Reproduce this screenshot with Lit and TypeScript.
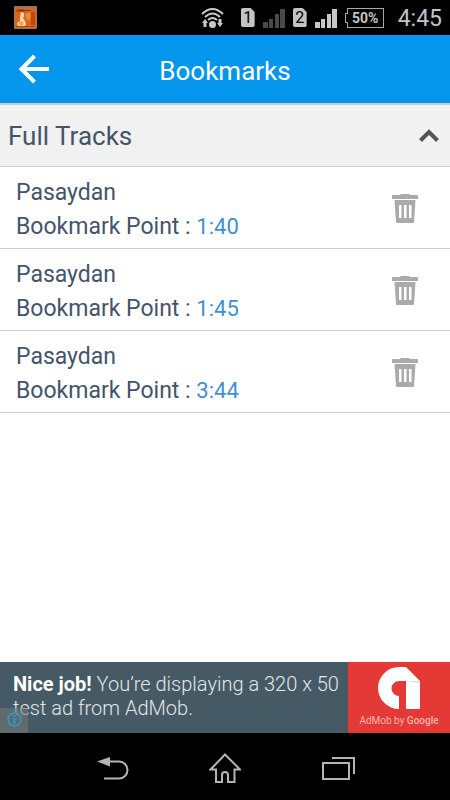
import { LitElement, html, css } from "lit";
import { customElement, property, state } from "lit/decorators.js";

interface Bookmark {
  track: string;
  point: string;
}

@customElement("status-bar")
class StatusBar extends LitElement {
  static styles = css`
    :host {
      display: flex;
      align-items: center;
      box-sizing: border-box;
      height: 35px;
      padding: 0 8px 0 14px;
      background: #000;
      color: #c4c4c4;
    }
    svg {
      display: block;
      flex: none;
    }
    .app {
      margin-right: auto;
    }
    .net {
      display: flex;
      align-items: center;
      gap: 8px;
      margin: 0 14px 0 17px;
    }
    .sim {
      width: 14px;
      height: 19px;
      background: #c4c4c4;
      color: #000;
      border-radius: 2px;
      clip-path: polygon(0 0, 10px 0, 100% 4px, 100% 100%, 0 100%);
      font-size: 16px;
      line-height: 19px;
      text-align: center;
    }
    .battery {
      position: relative;
      box-sizing: border-box;
      width: 37px;
      height: 20px;
      margin-left: 2px;
      border: 1px solid #a8a8a8;
      font-size: 14px;
      font-weight: 700;
      line-height: 18px;
      text-align: center;
    }
    .battery::before {
      content: "";
      position: absolute;
      left: -3px;
      top: 4px;
      width: 2px;
      height: 8px;
      border: 1px solid #a8a8a8;
      border-right: 0;
      background: #000;
    }
    .time {
      padding-top: 2px;
      font-size: 23px;
    }
  `;

  private bars(dim: boolean) {
    const tone = dim ? "#4a4a4a" : "#c8c8c8";
    return html`<svg width="22" height="20" viewBox="0 0 22 20" aria-hidden="true">
      <path d="M0 14h5v6H0zM6 11h4v9H6zM12 6h4v14h-4zM17 1h5v19h-5z" fill=${tone} />
    </svg>`;
  }

  render() {
    return html`
      <svg class="app" width="23" height="23" viewBox="0 0 23 23" aria-hidden="true">
        <rect width="23" height="23" rx="1" fill="#8d7a68" />
        <rect x="1" y="2" width="21" height="20" fill="#d9661c" />
        <path d="M2 3h8v3H2zM17 6h4v13h-4z" fill="#c14710" />
        <path d="M11 8l5-2 1 4-2 5-3-3z" fill="#e98a35" />
        <path d="M5 4h12v1H5z" fill="#6c3b20" />
        <path d="M7 6l3 1 0 3-1 2 2 3 1 3-1 2H4l-1-3 3-2 0-4z" fill="#f4d6ab" />
        <path d="M4 17l4-2 2 3-3 2z" fill="#e8a35a" />
        <path d="M2 20h19v1H2z" fill="#b44715" />
      </svg>
      <svg width="23" height="22" viewBox="0 0 23 22" aria-hidden="true">
        <g fill="none" stroke="#c8c8c8" stroke-width="2">
          <path d="M1 7q10.500-10 21 0" />
          <path d="M4 10q7.500-7 15 0" />
          <path d="M7 13q4.500-4 9 0" />
        </g>
        <circle cx="11.500" cy="17.500" r="3.500" fill="#c8c8c8" />
        <path d="M4 12l3 4H5.500v4h-3v-4H1zM19 20l-3-4h1.500v-4h3v4H22z" fill="#c8c8c8" />
      </svg>
      <div class="net">
        <span class="sim">1</span>
        ${this.bars(true)}
        <span class="sim">2</span>
        ${this.bars(false)}
        <span class="battery">50%</span>
      </div>
      <time class="time">4:45</time>
    `;
  }
}

@customElement("bookmark-row")
class BookmarkRow extends LitElement {
  @property({ attribute: false }) bookmark!: Bookmark;

  static styles = css`
    :host {
      display: flex;
      align-items: center;
      justify-content: space-between;
      padding: 9px 32px 4px 16px;
      border-bottom: 1px solid #ccc;
      font-size: 23px;
      line-height: 34px;
      color: #44546a;
    }
    p {
      margin: 0;
    }
    .point {
      color: #3f90d2;
      font-size: 22px;
    }
    button {
      padding: 0 0 4px;
      border: 0;
      background: none;
      cursor: pointer;
    }
    svg {
      display: block;
    }
  `;

  render() {
    return html`
      <div>
        <p>${this.bookmark.track}</p>
        <p>Bookmark Point : <span class="point">${this.bookmark.point}</span></p>
      </div>
      <button
        aria-label="Delete bookmark at ${this.bookmark.point}"
        @click=${() => this.dispatchEvent(new CustomEvent("remove"))}
      >
        <svg width="26" height="30" viewBox="0 0 26 30" aria-hidden="true">
          <path d="M0 3q0-1 1-1h7l1-1h8l1 1h7q1 0 1 1v3H0z" fill="#aaa" />
          <path d="M2.500 7h21l-1.500 22q0 1-1 1H5q-1 0-1-1z" fill="#aaa" />
          <path d="M7 12h2.500v13H7zM12 12h2.500v13H12zM17 12h2.500v13H17z" fill="#fff" />
        </svg>
      </button>
    `;
  }
}

@customElement("ad-banner")
class AdBanner extends LitElement {
  static styles = css`
    :host {
      display: block;
      position: relative;
    }
    .ad {
      display: flex;
      min-height: 71px;
      background: #455a64;
      color: #e3e7e9;
      text-decoration: none;
    }
    .copy {
      flex: 1;
      box-sizing: border-box;
      margin: 0;
      padding: 10px 8px 0 13px;
      font-size: 20px;
      font-weight: 300;
      line-height: 24px;
    }
    strong {
      font-weight: 700;
      color: #fff;
    }
    .brand {
      display: flex;
      flex-direction: column;
      align-items: center;
      gap: 5px;
      width: 102px;
      padding-top: 5px;
      background: #e53935;
      color: #f5b5b3;
      font-size: 10px;
      line-height: 14px;
      white-space: nowrap;
    }
    .google {
      font-weight: 500;
    }
    .info {
      position: absolute;
      left: 0;
      bottom: 0;
      padding: 4px 6px 6px 7px;
      border: 0;
      background: rgb(117 117 117 / 60%);
    }
    svg {
      display: block;
    }
  `;

  render() {
    return html`
      <a class="ad" href="#ad">
        <p class="copy"><strong>Nice job!</strong> You’re displaying a 320 x 50<br />test ad from AdMob.</p>
        <div class="brand">
          <svg width="42" height="42" viewBox="0 0 42 42" aria-hidden="true">
            <path
              d="M21 0H28L42 14V42H28V14H21A7.500 7.500 0 0 0 21 29V42A21 21 0 0 1 21 0z"
              fill="#fff"
            />
            <path d="M28 14h14v2z" fill="#ddd" />
          </svg>
          <span>AdMob by <span class="google">Google</span></span>
        </div>
      </a>
      <button class="info" aria-label="About this ad">
        <svg width="15" height="15" viewBox="0 0 15 15" aria-hidden="true">
          <circle cx="7.500" cy="7.500" r="6.500" fill="none" stroke="#2a9cc8" stroke-width="1.500" />
          <path d="M6.500 3h2v2h-2zM6 6h2.500v6h-2V7H6z" fill="#2a9cc8" />
        </svg>
      </button>
    `;
  }
}

@customElement("nav-bar")
class NavBar extends LitElement {
  static styles = css`
    :host {
      display: grid;
      grid-template-columns: repeat(3, 1fr);
      height: 67px;
      padding: 0 56px 0 57px;
      background: #000;
    }
    button {
      padding: 4px 0 0;
      border: 0;
      background: none;
      display: flex;
      align-items: center;
      justify-content: center;
    }
    svg {
      fill: none;
      stroke: #b4b4b4;
      stroke-width: 2;
    }
    .solid {
      fill: #b4b4b4;
      stroke: none;
    }
  `;

  render() {
    return html`
      <button aria-label="Back">
        <svg width="32" height="32" viewBox="0 0 32 32">
          <path d="M12 8.500H22a8.500 8.500 0 0 1 0 17H7" />
          <path class="solid" d="M0 8.500L13 4v9.500z" />
        </svg>
      </button>
      <button aria-label="Home">
        <svg width="32" height="32" viewBox="0 0 32 32">
          <path d="M16 1.500L1.500 16.500H7v12.500h6V22a3 3 0 0 1 6 0v7h6.500V16.500H31z" />
        </svg>
      </button>
      <button aria-label="Recent apps">
        <svg width="34" height="32" viewBox="0 0 34 32">
          <path d="M2 10h26v16H2zM11 5h22v16" />
        </svg>
      </button>
    `;
  }
}

@customElement("app-root")
class AppRoot extends LitElement {
  @state() private open = true;
  @state() private bookmarks: Bookmark[] = [
    { track: "Pasaydan", point: "1:40" },
    { track: "Pasaydan", point: "1:45" },
    { track: "Pasaydan", point: "3:44" },
  ];

  static styles = css`
    :host {
      display: flex;
      flex-direction: column;
      min-height: 100vh;
      background: #fff;
      font-family: Roboto, "Noto Sans", sans-serif;
    }
    header {
      display: grid;
      grid-template-columns: 32px 1fr 32px;
      align-items: center;
      height: 68px;
      padding: 0 18px;
      background: #0496ed;
      color: #fff;
      border-bottom: 2px solid #c9cbc6;
    }
    h1 {
      margin: 0;
      padding-top: 4px;
      font-size: 26px;
      font-weight: 400;
      line-height: 32px;
      text-align: center;
    }
    h2 {
      margin: 0;
    }
    button {
      border: 0;
      background: none;
      padding: 0;
      font: inherit;
      cursor: pointer;
    }
    svg {
      display: block;
    }
    main {
      flex: 1;
    }
    .group {
      display: flex;
      align-items: center;
      justify-content: space-between;
      width: 100%;
      height: 62px;
      padding: 0 11px 0 8px;
      background: #f1f1f1;
      border-bottom: 1px solid #ccc;
      color: #44546a;
      font-size: 26px;
      font-weight: 400;
    }
  `;

  private remove(b: Bookmark) {
    this.bookmarks = this.bookmarks.filter((x) => x !== b);
  }

  render() {
    return html`
      <status-bar></status-bar>
      <header>
        <button aria-label="Back">
          <svg width="32" height="32" viewBox="0 0 32 32">
            <path d="M16.500 3L3.500 16L16.500 29M3 16H31" fill="none" stroke="#fff" stroke-width="4" />
          </svg>
        </button>
        <h1>Bookmarks</h1>
      </header>
      <main>
        <h2>
          <button class="group" aria-expanded=${this.open} @click=${() => (this.open = !this.open)}>
            Full Tracks
            <svg width="20" height="14" viewBox="0 0 20 14">
              <path d="M1.500 11.500L10 3L18.500 11.500" fill="none" stroke="#555" stroke-width="4" />
            </svg>
          </button>
        </h2>
        ${this.open
          ? this.bookmarks.map(
              (b) => html`<bookmark-row .bookmark=${b} @remove=${() => this.remove(b)}></bookmark-row>`
            )
          : ""}
      </main>
      <ad-banner></ad-banner>
      <nav-bar></nav-bar>
    `;
  }
}
